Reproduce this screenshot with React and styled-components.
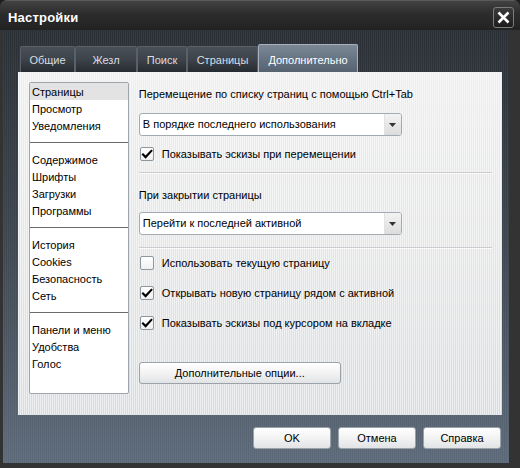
import React from 'react'
import styled, { createGlobalStyle } from 'styled-components'

const GlobalStyle = createGlobalStyle`
    html, body {
        margin: 0;
        padding: 0;
        background: #1e1e1e;
    }
    body {
        font-family: "Liberation Sans", Arial, sans-serif;
        font-size: 11px;
        color: #000;
    }
`;

const tabs = [
    { label: "Общие", width: 55 },
    { label: "Жезл", width: 62 },
    { label: "Поиск", width: 50 },
    { label: "Страницы", width: 71 },
    { label: "Дополнительно", width: 100, active: true },
];

const sections = [
    ["Страницы", "Просмотр", "Уведомления"],
    ["Содержимое", "Шрифты", "Загрузки", "Программы"],
    ["История", "Cookies", "Безопасность", "Сеть"],
    ["Панели и меню", "Удобства", "Голос"],
];

const Check = () => (
    <svg width="13" height="13" viewBox="0 0 13 13">
        <path d="M2.2 6.4 L5 9.3 L11.2 2.6" fill="none" stroke="#000" strokeWidth="2.3" strokeLinecap="square" />
    </svg>
);

const CheckRow = ({ checked, children, mt }) => (
    <Row $mt={mt}>
        <Box>{checked && <Check />}</Box>
        <span>{children}</span>
    </Row>
);

const Dropdown = ({ value, mt }) => (
    <Select $mt={mt}>
        <SelectText>{value}</SelectText>
        <Arrow>
            <svg width="7" height="4" viewBox="0 0 7 4">
                <path d="M0 0 H7 L3.5 4 Z" fill="#333" />
            </svg>
        </Arrow>
    </Select>
);

const App = () => {
    return (
        <>
            <GlobalStyle />
            <Window>
                <TitleBar>
                    <Title>Настройки</Title>
                    <CloseButton>
                        <svg width="13" height="13" viewBox="0 0 13 13">
                            <path d="M1.5 1.5 L11.5 11.5 M11.5 1.5 L1.5 11.5" stroke="#fff" strokeWidth="2.6" />
                        </svg>
                    </CloseButton>
                </TitleBar>
                <Body>
                    <TabRow>
                        {tabs.map(t => (
                            <Tab key={t.label} $active={t.active} $width={t.width}>{t.label}</Tab>
                        ))}
                    </TabRow>
                    <Panel>
                        <ListBox>
                            {sections.map((group, i) => (
                                <React.Fragment key={i}>
                                    {i > 0 && <ListSep />}
                                    {group.map(item => (
                                        <ListItem key={item} $selected={item === "Страницы"}>{item}</ListItem>
                                    ))}
                                </React.Fragment>
                            ))}
                        </ListBox>
                        <Options>
                            <Heading $mt={2}>Перемещение по списку страниц с помощью Ctrl+Tab</Heading>
                            <Dropdown mt={11} value="В порядке последнего использования" />
                            <CheckRow mt={10} checked>Показывать эскизы при перемещении</CheckRow>
                            <Divider $mt={10} />
                            <Heading $mt={12}>При закрытии страницы</Heading>
                            <Dropdown mt={9} value="Перейти к последней активной" />
                            <Divider $mt={12} />
                            <CheckRow mt={7}>Использовать текущую страницу</CheckRow>
                            <CheckRow mt={14} checked>Открывать новую страницу рядом с активной</CheckRow>
                            <CheckRow mt={14} checked>Показывать эскизы под курсором на вкладке</CheckRow>
                            <Button $mt={31} $width={202}>Дополнительные опции...</Button>
                        </Options>
                    </Panel>
                    <Footer>
                        <Button $width={78}>OK</Button>
                        <Button $width={78}>Отмена</Button>
                        <Button $width={78}>Справка</Button>
                    </Footer>
                </Body>
            </Window>
        </>
    )
}

export default App;

const Window = styled.div`
    width: 520px;
    height: 468px;
    box-sizing: border-box;
    display: flex;
    flex-direction: column;
    background: #333;
    border-radius: 7px 7px 0 0;
    overflow: hidden;
`;

const TitleBar = styled.div`
    height: 30px;
    flex: none;
    display: flex;
    align-items: center;
    justify-content: space-between;
    padding: 3px 6px 0 8px;
    background: linear-gradient(#424242, #2c2c2c 45%, #222);
    border-top: 1px solid #5a5a5a;
    box-sizing: border-box;
`;

const Title = styled.div`
    color: #fff;
    font-weight: bold;
    font-size: 13px;
    letter-spacing: 0.2px;
`;

const CloseButton = styled.div`
    width: 21px;
    height: 21px;
    box-sizing: border-box;
    display: flex;
    align-items: center;
    justify-content: center;
    border: 1px solid #7c7c7c;
    border-radius: 3px;
    background: linear-gradient(#3c3c3c, #1c1c1c);
`;

const Body = styled.div`
    flex: 1;
    margin: 0 11px 5px 3px;
    padding: 14px 7px 15px 15px;
    display: flex;
    flex-direction: column;
    background:
        repeating-linear-gradient(90deg, rgba(255,255,255,0.05) 0 1px, transparent 1px 2px),
        linear-gradient(#2a2f35, #3b434c 45%, #5c6978);
`;

const TabRow = styled.div`
    height: 28px;
    display: flex;
    align-items: flex-end;
    padding-left: 2px;
`;

const Tab = styled.div`
    width: ${p => p.$width}px;
    height: ${p => p.$active ? 28 : 26}px;
    box-sizing: border-box;
    display: flex;
    align-items: center;
    justify-content: center;
    padding-top: ${p => p.$active ? 3 : 0}px;
    border: 1px solid ${p => p.$active ? '#a7b0ba' : '#59606a'};
    border-bottom: none;
    border-radius: 2px 2px 0 0;
    color: ${p => p.$active ? '#fff' : '#dadde0'};
    background: ${p => p.$active
        ? 'linear-gradient(#7c8895, #677483 50%, #56626f)'
        : 'linear-gradient(#4a5058, #3d434a 50%, #262b31)'};
`;

const Panel = styled.div`
    height: 343px;
    box-sizing: border-box;
    display: flex;
    gap: 10px;
    padding: 10px 10px 0 11px;
    background:
        repeating-linear-gradient(90deg, rgba(255,255,255,0.55) 0 1px, transparent 1px 2px),
        linear-gradient(#eeeeee, #e4e5e6 50%, #d8dbde);
`;

const ListBox = styled.div`
    width: 100px;
    height: 312px;
    box-sizing: border-box;
    border: 1px solid #9ea5ad;
    border-radius: 2px;
    background: #fff;
`;

const ListItem = styled.div`
    height: 17px;
    line-height: 19px;
    padding-left: 2px;
    background: ${p => p.$selected ? '#e3e3e3' : 'transparent'};
`;

const ListSep = styled.div`
    height: 17px;
    display: flex;
    align-items: center;
    &::after {
        content: "";
        flex: 1;
        height: 1px;
        background: #6b6b6b;
    }
`;

const Options = styled.div`
    width: 354px;
    display: flex;
    flex-direction: column;
    align-items: flex-start;
`;

const Heading = styled.div`
    height: 18px;
    line-height: 20px;
    margin-top: ${p => p.$mt || 0}px;
`;

const Select = styled.div`
    width: 263px;
    height: 23px;
    box-sizing: border-box;
    margin-top: ${p => p.$mt || 0}px;
    display: flex;
    border: 1px solid #a3aab2;
    border-radius: 3px;
    background: #fff;
    overflow: hidden;
`;

const SelectText = styled.div`
    flex: 1;
    padding-left: 3px;
    line-height: 21px;
`;

const Arrow = styled.div`
    width: 16px;
    display: flex;
    align-items: center;
    justify-content: center;
    background: linear-gradient(#f3f3f3, #dcdcdc);
    border-left: 1px solid #e2e2e2;
`;

const Row = styled.div`
    height: 16px;
    margin-top: ${p => p.$mt || 0}px;
    display: flex;
    align-items: center;
    gap: 8px;
    padding-left: 1px;
`;

const Box = styled.div`
    width: 14px;
    height: 14px;
    box-sizing: border-box;
    border: 1px solid #8e969e;
    border-radius: 2px;
    background: linear-gradient(#ffffff, #f0f0f0);
    display: flex;
    align-items: center;
    justify-content: center;
`;

const Divider = styled.div`
    align-self: stretch;
    height: 1px;
    margin-top: ${p => p.$mt || 0}px;
    background: #c9cdd1;
    box-shadow: 0 1px 0 #fafafa;
`;

const Button = styled.div`
    width: ${p => p.$width}px;
    height: 22px;
    box-sizing: border-box;
    margin-top: ${p => p.$mt || 0}px;
    display: flex;
    align-items: center;
    justify-content: center;
    border: 1px solid #9aa1a9;
    border-radius: 3px;
    background: linear-gradient(#ffffff, #f4f4f4 45%, #e1e3e5);
`;

const Footer = styled.div`
    margin-top: 12px;
    height: 21px;
    display: flex;
    justify-content: flex-end;
    gap: 7px;
    padding-right: 1px;
`;
